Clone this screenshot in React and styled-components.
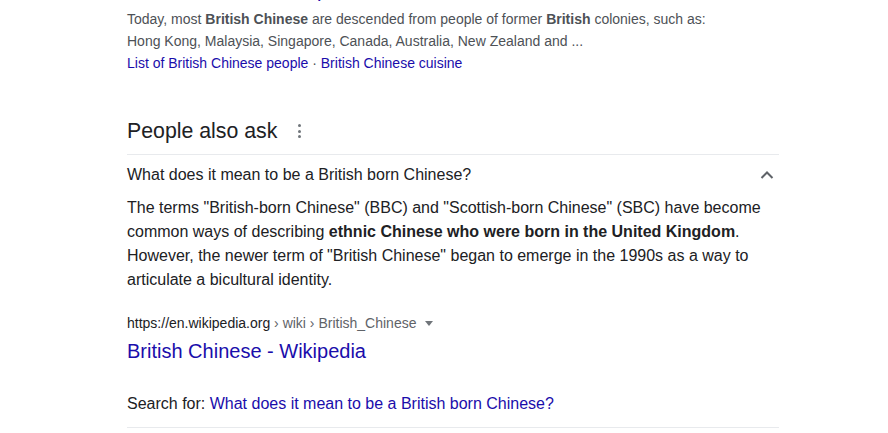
import React from 'react'
import styled, { createGlobalStyle } from 'styled-components'

const GlobalStyle = createGlobalStyle`
  body {
    margin: 0;
    background: #fff;
    font-family: "Liberation Sans", Arial, sans-serif;
  }
`;

const Page = styled.div`
  width: 652px;
  padding-left: 127px;
  overflow: hidden;
  height: 433px;
`;

const TitleLink = styled.a`
  display: block;
  font-size: 20px;
  line-height: 26px;
  color: #1a0dab;
  text-decoration: none;
  margin-top: ${(p) => p.$top || 0}px;
`;

const Snippet = styled.div`
  margin-top: 5px;
  font-size: 14px;
  line-height: 22px;
  color: #4d5156;

  b {
    font-weight: bold;
  }
`;

const SubLinks = styled.div`
  font-size: 14px;
  line-height: 22px;
  color: #4d5156;

  a {
    color: #1a0dab;
    text-decoration: none;
  }
`;

const Header = styled.div`
  margin-top: 43px;
  padding-bottom: 9px;
  border-bottom: 1px solid #e8eaed;
  display: flex;
  align-items: center;
`;

const Heading = styled.h2`
  margin: 0;
  font-size: 21.3px;
  line-height: 28px;
  font-weight: normal;
  color: #202124;
`;

const Kebab = styled.span`
  margin-left: 21px;
  display: flex;
  flex-direction: column;
  gap: 2.5px;

  i {
    width: 3px;
    height: 3px;
    border-radius: 50%;
    background: #70757a;
  }
`;

const Question = styled.div`
  padding-top: 8px;
  display: flex;
  align-items: center;
  justify-content: space-between;
  font-size: 16px;
  line-height: 24px;
  color: #202124;

  svg {
    margin-right: 5px;
  }
`;

const Answer = styled.div`
  margin-top: 9px;
  font-size: 16px;
  line-height: 24px;
  color: #202124;
`;

const Cite = styled.div`
  margin-top: 20px;
  font-size: 14px;
  line-height: 22px;
  color: #202124;
  display: flex;
  align-items: center;

  span {
    color: #5f6368;
    white-space: pre;
  }
`;

const Caret = styled.i`
  margin-left: 9px;
  margin-top: 1px;
  border-left: 4px solid transparent;
  border-right: 4px solid transparent;
  border-top: 5px solid #70757a;
`;

const SearchFor = styled.div`
  margin-top: 28px;
  padding-bottom: 11px;
  border-bottom: 1px solid #e8eaed;
  font-size: 16px;
  line-height: 24px;
  color: #202124;

  a {
    color: #1a0dab;
    text-decoration: none;
  }
`;

export default function App() {
  return (
    <>
      <GlobalStyle />
      <Page>
        <TitleLink href="#" $top={-23}>British Chinese - Wikipedia</TitleLink>
        <Snippet>
          Today, most <b>British Chinese</b> are descended from people of former <b>British</b> colonies, such as:
          <br />
          Hong Kong, Malaysia, Singapore, Canada, Australia, New Zealand and ...
        </Snippet>
        <SubLinks>
          <a href="#">List of British Chinese people</a> · <a href="#">British Chinese cuisine</a>
        </SubLinks>

        <Header>
          <Heading>People also ask</Heading>
          <Kebab><i /><i /><i /></Kebab>
        </Header>

        <Question>
          What does it mean to be a British born Chinese?
          <svg width="14" height="10" viewBox="0 0 14 10">
            <polyline points="1.5,8 7,2.5 12.5,8" fill="none" stroke="#5f6368" strokeWidth="2" />
          </svg>
        </Question>

        <Answer>
          The terms "British-born Chinese" (BBC) and "Scottish-born Chinese" (SBC) have become
          common ways of describing <b>ethnic Chinese who were born in the United Kingdom</b>.
          However, the newer term of "British Chinese" began to emerge in the 1990s as a way to
          articulate a bicultural identity.
        </Answer>

        <Cite>
          https://en.wikipedia.org<span> › wiki › British_Chinese</span>
          <Caret />
        </Cite>
        <TitleLink href="#" $top={4}>British Chinese - Wikipedia</TitleLink>

        <SearchFor>
          Search for: <a href="#">What does it mean to be a British born Chinese?</a>
        </SearchFor>
      </Page>
    </>
  );
}
